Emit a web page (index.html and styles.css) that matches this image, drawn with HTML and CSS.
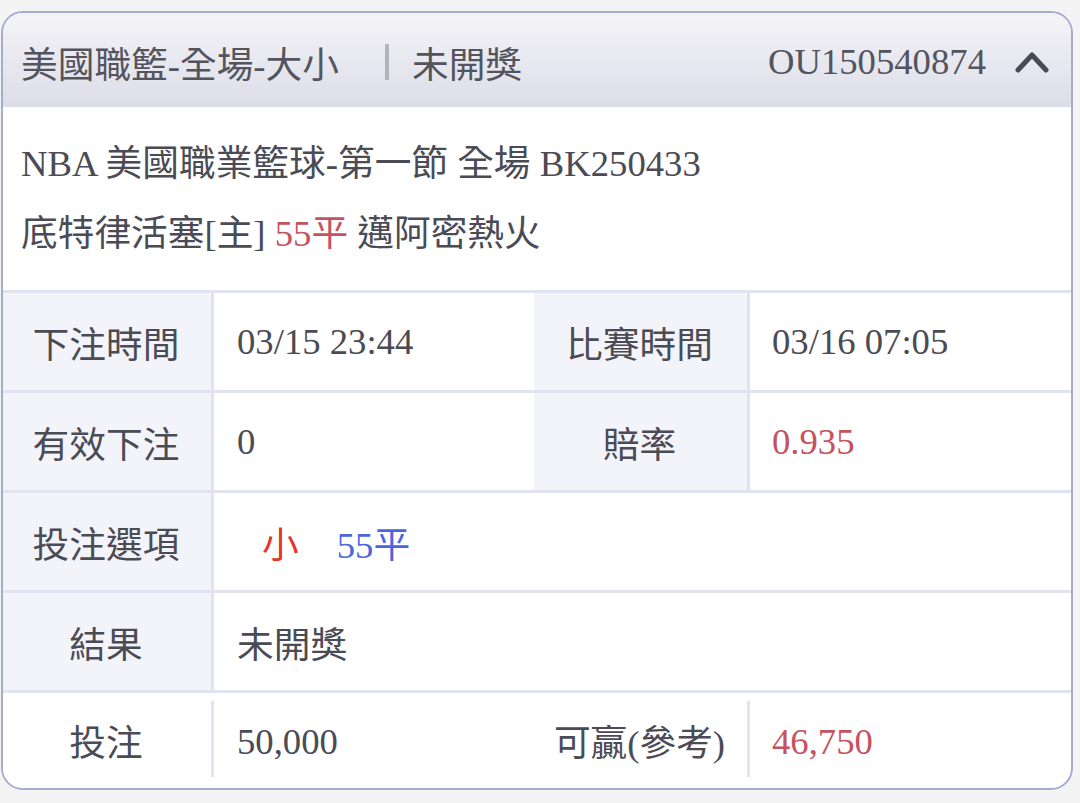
FILE: index.html
```html
<!DOCTYPE html>
<html lang="zh-Hant">
<head>
<meta charset="utf-8">
<title>注單</title>
<link rel="stylesheet" href="styles.css">
</head>
<body>
<div class="card">
  <div class="head">
    <span class="title">美國職籃-全場-大小</span>
    <span class="bar"></span>
    <span class="status">未開獎</span>
    <span class="order">OU150540874</span>
    <svg class="chev" width="34" height="24" viewBox="0 0 34 24"><path d="M3 20 L17 5 L31 20" fill="none" stroke="#4a4a55" stroke-width="5" stroke-linecap="round" stroke-linejoin="round"/></svg>
  </div>
  <div class="info">
    <div class="line">NBA 美國職業籃球-第一節 全場 BK250433</div>
    <div class="line">底特律活塞[主] <span class="red">55平</span> 邁阿密熱火</div>
  </div>
  <div class="row">
    <div class="lab">下注時間</div>
    <div class="val">03/15 23:44</div>
    <div class="lab">比賽時間</div>
    <div class="val">03/16 07:05</div>
  </div>
  <div class="row">
    <div class="lab">有效下注</div>
    <div class="val">0</div>
    <div class="lab">賠率</div>
    <div class="val red">0.935</div>
  </div>
  <div class="row">
    <div class="lab">投注選項</div>
    <div class="val wide"><span class="pick">小</span><span class="hcap">55平</span></div>
  </div>
  <div class="row">
    <div class="lab">結果</div>
    <div class="val wide">未開獎</div>
  </div>
  <div class="row plain">
    <div class="lab">投注</div>
    <div class="val">50,000</div>
    <div class="lab">可贏(參考)</div>
    <div class="val red">46,750</div>
  </div>
</div>
</body>
</html>
```

FILE: styles.css
```css
html, body {
  margin: 0;
  padding: 0;
  background: #f4f4f5;
}
body {
  font-family: "Liberation Serif", "Noto Sans CJK TC", serif;
  font-size: 36.7px;
  color: #4b4b55;
}
.card {
  box-sizing: border-box;
  width: 1072px;
  height: 779px;
  margin: 11px 0 0 1px;
  border: 2px solid #a6abd0;
  border-radius: 22px;
  background: #fff;
  overflow: hidden;
}
.head {
  height: 94px;
  display: flex;
  align-items: center;
  padding: 3px 22px 0 18px;
  box-sizing: border-box;
  background: linear-gradient(#f4f4f8, #dcdde8);
  color: #54545e;
}
.bar {
  width: 4px;
  height: 36px;
  background: #b3b3bc;
  margin: 0 23px 0 46px;
}
.order {
  margin-left: auto;
  margin-right: 29px;
}
.chev {
  display: block;
}
.info {
  padding: 22px 18px 21px 18px;
}
.line {
  height: 70px;
  line-height: 70px;
  white-space: nowrap;
}
.red {
  color: #c6525f;
}
.row {
  display: grid;
  grid-template-columns: 211px 320px 216px 1fr;
  height: 100px;
  box-sizing: border-box;
  border-top: 3px solid #e2e3f0;
}
.lab {
  background: #f3f4fa;
  display: flex;
  align-items: center;
  justify-content: center;
  border-right: 3px solid #e2e3f0;
  padding-right: 2px;
}
.val {
  display: flex;
  align-items: center;
  padding-left: 23px;
}
.row .val:nth-child(4) {
  padding-left: 22px;
}
.val.wide {
  grid-column: 2 / 5;
}
.pick {
  color: #e4352a;
  margin-left: 25px;
}
.hcap {
  color: #4c64de;
  margin-left: 38px;
}
.row.plain {
  height: 97px;
}
.row.plain .lab {
  background: #fff;
  border-right: 0;
  padding-right: 5px;
}
.row.plain .val {
  align-self: center;
  height: 76px;
  padding-top: 4px;
  box-sizing: border-box;
  border-left: 3px solid #e2e3f0;
  margin-top: -2px;
  margin-left: -3px;
}
```
